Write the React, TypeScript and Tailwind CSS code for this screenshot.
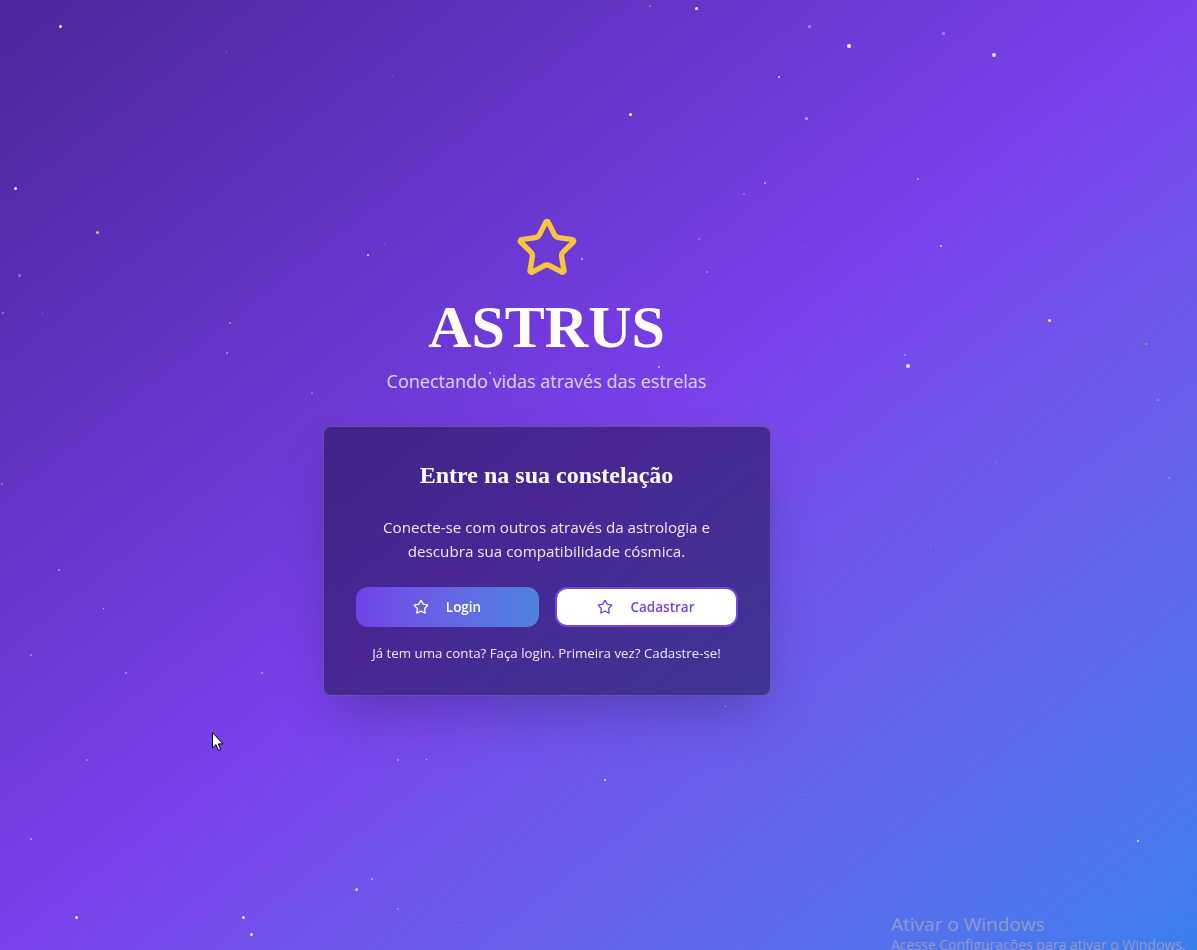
import React from "react";
import { Star } from "lucide-react";

type Dot = { x: number; y: number; s: number; o: number; c?: string };

const stars: Dot[] = [
  { x: 650, y: 6, s: 2, o: 0.4 },
  { x: 696, y: 8, s: 3, o: 0.95 },
  { x: 809, y: 26, s: 3, o: 0.45 },
  { x: 943, y: 33, s: 3, o: 0.4 },
  { x: 849, y: 46, s: 4, o: 0.95 },
  { x: 994, y: 55, s: 4, o: 0.8 },
  { x: 779, y: 77, s: 2, o: 0.8 },
  { x: 630, y: 114, s: 3, o: 0.95 },
  { x: 806, y: 118, s: 3, o: 0.55 },
  { x: 765, y: 183, s: 2, o: 0.6 },
  { x: 744, y: 194, s: 2, o: 0.3 },
  { x: 918, y: 179, s: 2, o: 0.5 },
  { x: 699, y: 239, s: 2, o: 0.35 },
  { x: 805, y: 246, s: 1, o: 0.4 },
  { x: 941, y: 246, s: 2, o: 0.8 },
  { x: 707, y: 272, s: 2, o: 0.35 },
  { x: 60, y: 26, s: 3, o: 0.9 },
  { x: 226, y: 51, s: 1, o: 0.5 },
  { x: 392, y: 76, s: 1, o: 0.4 },
  { x: 15, y: 188, s: 3, o: 0.9 },
  { x: 97, y: 232, s: 3, o: 0.95, c: "#f5c542" },
  { x: 384, y: 243, s: 1, o: 0.4 },
  { x: 368, y: 255, s: 2, o: 0.8 },
  { x: 19, y: 275, s: 3, o: 0.35 },
  { x: 582, y: 259, s: 2, o: 0.6 },
  { x: 3, y: 313, s: 2, o: 0.4 },
  { x: 42, y: 313, s: 1, o: 0.4 },
  { x: 230, y: 323, s: 2, o: 0.4 },
  { x: 227, y: 353, s: 2, o: 0.45 },
  { x: 312, y: 393, s: 2, o: 0.35 },
  { x: 490, y: 373, s: 2, o: 0.6 },
  { x: 659, y: 367, s: 2, o: 0.7 },
  { x: 2, y: 484, s: 2, o: 0.4 },
  { x: 59, y: 570, s: 2, o: 0.45 },
  { x: 103, y: 608, s: 1, o: 0.9 },
  { x: 31, y: 655, s: 2, o: 0.45 },
  { x: 126, y: 673, s: 2, o: 0.45 },
  { x: 262, y: 673, s: 2, o: 0.45 },
  { x: 1049, y: 320, s: 3, o: 0.9 },
  { x: 1146, y: 344, s: 2, o: 0.9, c: "#f59e0b" },
  { x: 905, y: 355, s: 2, o: 0.4 },
  { x: 908, y: 366, s: 4, o: 0.85 },
  { x: 1158, y: 400, s: 2, o: 0.35 },
  { x: 995, y: 462, s: 1, o: 0.4 },
  { x: 1169, y: 478, s: 2, o: 0.3 },
  { x: 930, y: 545, s: 1, o: 0.45 },
  { x: 87, y: 760, s: 2, o: 0.35 },
  { x: 31, y: 839, s: 2, o: 0.6 },
  { x: 398, y: 760, s: 2, o: 0.5 },
  { x: 426, y: 759, s: 1, o: 0.95 },
  { x: 372, y: 879, s: 2, o: 0.6 },
  { x: 356, y: 889, s: 3, o: 0.7 },
  { x: 398, y: 909, s: 2, o: 0.35 },
  { x: 458, y: 925, s: 1, o: 0.4 },
  { x: 76, y: 917, s: 3, o: 0.95 },
  { x: 243, y: 917, s: 3, o: 0.9 },
  { x: 251, y: 934, s: 3, o: 0.85 },
  { x: 725, y: 706, s: 1, o: 0.9 },
  { x: 605, y: 780, s: 2, o: 0.85 },
  { x: 805, y: 794, s: 1, o: 0.4 },
  { x: 1138, y: 841, s: 2, o: 0.8 },
];

function Cursor() {
  return (
    <svg
      className="absolute left-[212px] top-[732px]"
      width="12"
      height="20"
      viewBox="0 0 12 20"
    >
      <path
        d="M0.5 0.5 L0.5 16 L4 12.6 L6.4 18.4 L8.6 17.5 L6.3 11.9 L11 11.9 Z"
        fill="#ffffff"
        stroke="#000000"
        strokeWidth="1"
        strokeLinejoin="round"
      />
    </svg>
  );
}

export default function App() {
  return (
    <div className="relative h-[950px] w-full overflow-hidden bg-gradient-to-br from-[#4a279b] via-[#7a40ec] to-[#3a7fec] font-['Segoe_UI','Open_Sans',sans-serif]">
      <div className="pointer-events-none absolute inset-0">
        {stars.map((d, i) => (
          <span
            key={i}
            className="absolute rounded-full"
            style={{
              left: d.x - d.s / 2,
              top: d.y - d.s / 2,
              width: d.s,
              height: d.s,
              opacity: d.o,
              backgroundColor: d.c ?? "#ffffff",
            }}
          />
        ))}
      </div>

      <div className="relative flex w-[1093px] flex-col items-center pt-[216px]">
        <Star className="mb-[17px] h-16 w-16 text-[#f8c63d]" strokeWidth={2} />
        <h1 className="font-['Liberation_Serif','Times_New_Roman',serif] text-[60px] font-bold leading-[60px] text-white">
          ASTRUS
        </h1>
        <p className="mt-[10px] text-[18px] leading-[28px] text-[#ddd3fb]">
          Conectando vidas através das estrelas
        </p>

        <div className="mt-[31px] w-[448px] rounded-lg border border-white/20 bg-[#160e3c]/50 p-8 text-center shadow-2xl backdrop-blur-sm">
          <h2 className="font-['Liberation_Serif','Times_New_Roman',serif] text-2xl font-bold leading-8 text-white">
            Entre na sua constelação
          </h2>
          <p className="mt-6 text-[15.2px] leading-6 text-[#ece8f8]">
            Conecte-se com outros através da astrologia e
            <br />
            descubra sua compatibilidade cósmica.
          </p>
          <div className="mt-6 grid grid-cols-2 gap-4">
            <button className="flex h-10 items-center justify-center gap-[17px] rounded-xl bg-gradient-to-r from-[#7142e8] to-[#4e82e0] text-[13.5px] font-semibold text-white">
              <Star className="h-4 w-4" strokeWidth={2} />
              Login
            </button>
            <button className="flex h-10 items-center justify-center gap-[17px] rounded-xl border-2 border-[#7444e6] bg-white text-[13.5px] font-semibold text-[#7444e6]">
              <Star className="h-4 w-4" strokeWidth={2} />
              Cadastrar
            </button>
          </div>
          <p className="mt-4 text-[13.3px] leading-5 text-[#ece8f8]">
            Já tem uma conta? Faça login. Primeira vez? Cadastre-se!
          </p>
        </div>
      </div>

      <div className="pointer-events-none absolute left-[891px] top-[912px] leading-none text-[#9499cc]">
        <div className="text-[19px] leading-[24px]">Ativar o Windows</div>
        <div className="text-[14px] leading-[18px]">
          Acesse Configurações para ativar o Windows.
        </div>
      </div>

      <Cursor />
    </div>
  );
}
